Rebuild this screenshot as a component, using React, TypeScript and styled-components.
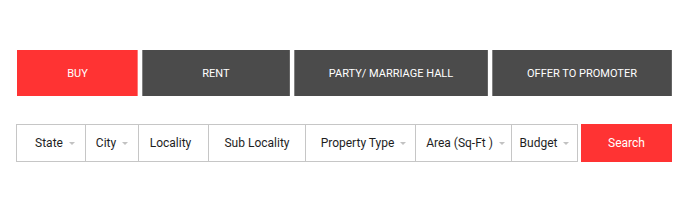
import { createGlobalStyle, styled } from 'styled-components';

const GlobalStyle = createGlobalStyle`
  html, body {
    margin: 0;
    padding: 0;
    background: #ffffff;
    font-family: Roboto, 'Liberation Sans', Arial, sans-serif;
  }
`;

const Page = styled.div`
  padding: 50px 0 0 16px;
  display: flex;
  flex-direction: column;
  gap: 28px;
`;

const Tabs = styled.div`
  display: flex;
  gap: 4px;
  padding-left: 1px;
`;

const Tab = styled.div<{ $active?: boolean; $width: number }>`
  width: ${(p) => p.$width}px;
  height: 46px;
  display: flex;
  align-items: center;
  justify-content: center;
  background: ${(p) => (p.$active ? '#ff3333' : '#4b4b4b')};
  box-shadow: ${(p) =>
    p.$active
      ? 'inset -1px 0 rgba(255,255,255,0.35)'
      : 'inset 1px 0 rgba(255,255,255,0.3), inset -1px 0 rgba(255,255,255,0.15)'};
  color: #ffffff;
  font-size: 11px;
  text-transform: uppercase;
  cursor: pointer;
`;

const SearchRow = styled.div`
  display: flex;
  align-items: stretch;
  gap: 3px;
`;

const Fields = styled.div`
  display: flex;
  height: 38px;
  border: 1px solid #c6c6c6;
  box-sizing: border-box;
`;

const Field = styled.div<{ $width: number; $shift?: number }>`
  box-sizing: border-box;
  width: ${(p) => p.$width}px;
  padding-left: ${(p) => Math.max(0, (p.$shift ?? 0) * 2)}px;
  padding-right: ${(p) => Math.max(0, -(p.$shift ?? 0) * 2)}px;
  display: flex;
  align-items: center;
  justify-content: center;
  gap: 6px;
  color: #1e1e1e;
  font-size: 12px;

  & + & {
    border-left: 1px solid #c6c6c6;
  }
`;

const Caret = styled.span`
  width: 0;
  height: 0;
  border-left: 3px solid transparent;
  border-right: 3px solid transparent;
  border-top: 3px solid #c2c2c2;
  margin-top: 1px;
`;

const SearchButton = styled.button`
  width: 91px;
  height: 38px;
  border: none;
  background: #ff3333;
  color: #ffffff;
  font-family: inherit;
  font-size: 12px;
  cursor: pointer;
`;

const tabs = [
  { label: 'Buy', width: 121, active: true },
  { label: 'Rent', width: 148 },
  { label: 'Party/ Marriage Hall', width: 194 },
  { label: 'Offer to Promoter', width: 180 },
];

const fields = [
  { label: 'State', width: 68, caret: true, shift: 4 },
  { label: 'City', width: 53, caret: true },
  { label: 'Locality', width: 70, shift: -3 },
  { label: 'Sub Locality', width: 97 },
  { label: 'Property Type', width: 110, caret: true, shift: 3 },
  { label: 'Area (Sq-Ft )', width: 96, caret: true, shift: 2 },
  { label: 'Budget', width: 66, caret: true },
];

const App = () => {
  return (
    <>
      <GlobalStyle />
      <Page>
        <Tabs>
          {tabs.map((t) => (
            <Tab key={t.label} $active={t.active} $width={t.width}>
              {t.label}
            </Tab>
          ))}
        </Tabs>
        <SearchRow>
          <Fields>
            {fields.map((f) => (
              <Field key={f.label} $width={f.width} $shift={f.shift}>
                {f.label}
                {f.caret && <Caret />}
              </Field>
            ))}
          </Fields>
          <SearchButton>Search</SearchButton>
        </SearchRow>
      </Page>
    </>
  );
};

export default App;
